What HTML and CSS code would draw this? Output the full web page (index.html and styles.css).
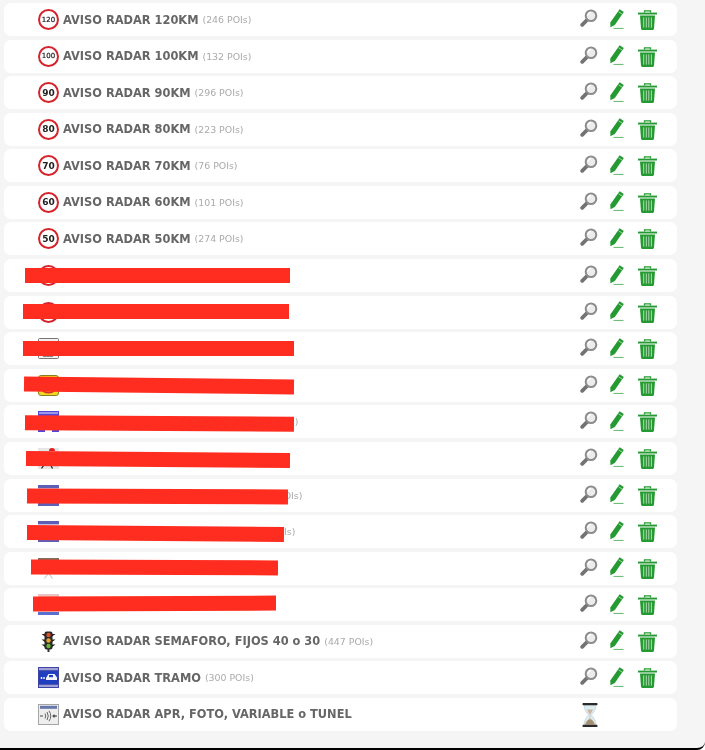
FILE: index.html
```html
<!DOCTYPE html>
<html lang="en">
  <head>
    <meta charset="UTF-8" />
    <meta name="viewport" content="width=device-width, initial-scale=1.0" />
    <title>Aviso radar</title>
    <link rel="stylesheet" href="styles.css">
  </head>
  <body>
    <svg class="defs" width="0" height="0" aria-hidden="true">
      <defs>
        <symbol id="i-search" viewBox="0 0 18 18">
          <path d="M7.5 10.500 2.200 15.800" stroke="#737373" stroke-width="3.800" stroke-linecap="round" fill="none" />
          <circle cx="11" cy="6.800" r="5.300" fill="#ececec" stroke="#8c8c8c" stroke-width="2" />
          <path d="M8 6.500a3 3 0 0 1 3-3" stroke="#fff" stroke-width="1.400" fill="none" />
        </symbol>
        <symbol id="i-pencil" viewBox="0 0 14 20">
          <path d="M9.600 0.300 13.800 3 4.800 16 .4 18.300 .3 13.400Z" fill="#269a32" />
          <path d="M8.600 2.800 12 5" stroke="#d6efd8" stroke-width=".7" />
          <rect x="3.500" y="18.900" width="10" height="1.100" fill="#6fbd77" />
        </symbol>
        <symbol id="i-trash" viewBox="0 0 19 20">
          <path d="M6.500 2.400V.9h6v1.500" stroke="#269a32" stroke-width="1.300" fill="none" />
          <rect x="0" y="2.600" width="19" height="1.900" fill="#269a32" />
          <path d="M2 5.400h15l-1 13.200q-.1 1.300-1.300 1.300H4.300q-1.200 0-1.300-1.300Z" fill="#269a32" />
          <path d="M5.700 7.400v10.200M8.300 7.400v10.200M10.800 7.400v10.200M13.400 7.400v10.200" stroke="#bfe3c2" stroke-width=".9" />
        </symbol>
        <symbol id="i-hourglass" viewBox="0 0 16 24">
          <path d="M2 2h12c0 5-3 8-4.600 10C11 14 14 17 14 22H2c0-5 3-8 4.600-10C5 10 2 7 2 2Z" fill="#dcecf0" stroke="#b9cdd3" stroke-width=".6" />
          <path d="M5 6.500h6L8.400 11.500h-.8Z" fill="#c9b9a0" />
          <path d="M8 12v4M3.400 21.500c.6-3 2.800-5 4.600-5.500 1.800.5 4 2.500 4.600 5.500Z" fill="#a58f70" stroke="#b8a68c" stroke-width=".5" />
          <rect x="0.500" y="0" width="15" height="2.200" rx=".8" fill="#2b2b2b" />
          <rect x="0.500" y="21.800" width="15" height="2.200" rx=".8" fill="#2b2b2b" />
        </symbol>
        <symbol id="s-light" viewBox="0 0 21 21">
          <path d="M3.500 3h3.500v2.500ZM17.500 3H14v2.500ZM3.500 8.500h3.500V11ZM17.500 8.500H14V11ZM3.500 13.500h3.500V16ZM17.500 13.500H14V16Z" fill="#1c1c1c" />
          <rect x="6.500" y="0.500" width="8" height="18" rx="2" fill="#2a2a2a" />
          <rect x="9.500" y="18" width="2" height="3" fill="#333" />
          <circle cx="10.500" cy="4" r="2.200" fill="#d9502b" />
          <circle cx="10.500" cy="9.500" r="2.200" fill="#e9a52c" />
          <circle cx="10.500" cy="15" r="2.200" fill="#6ab531" />
        </symbol>
        <symbol id="s-blue" viewBox="0 0 21 21">
          <rect width="21" height="21" fill="#3f43a6" />
          <rect x="1" y="1" width="19" height="2.200" fill="#9ea1d6" />
          <rect x="1" y="17.800" width="19" height="2.200" fill="#9ea1d6" />
          <rect x="1" y="4.200" width="19" height="12.600" fill="#1f3fc0" />
          <path d="M8 11 10.500 7h6l2.500 3.500v2.500H8Z" fill="#f2f4ff" />
          <circle cx="3.500" cy="11" r=".9" fill="#fff" />
          <circle cx="6" cy="11" r=".9" fill="#fff" />
          <rect x="11" y="8" width="4" height="2.200" fill="#1f3fc0" />
        </symbol>
        <symbol id="s-apr" viewBox="0 0 21 21">
          <rect x=".5" y=".5" width="20" height="20" fill="#eeeeee" stroke="#a5a5a5" />
          <rect x="2" y="1.800" width="17" height="3" fill="#6577ab" />
          <path d="M2 12h3M16 12h3" stroke="#444" stroke-width="1.200" />
          <path d="M7 9.500q1.500 2.500 0 5M9 8q2.500 4 0 8M11 6.800q3.500 5.200 0 10.400" stroke="#555" stroke-width=".9" fill="none" />
          <circle cx="16" cy="12" r="1.500" fill="#555" />
        </symbol>
        <symbol id="s-white" viewBox="0 0 21 21">
          <rect x=".5" y=".5" width="20" height="20" rx="1" fill="#f2f2f2" stroke="#777" />
          <rect x="5" y="15" width="10" height="3.500" fill="#1a1a1a" />
        </symbol>
        <symbol id="s-yellow" viewBox="0 0 21 21">
          <rect x=".5" y=".5" width="20" height="20" rx="2.500" fill="#f4d820" stroke="#8b7d22" />
          <path d="M5 16q5.500 3.500 11 0" stroke="#d8332a" stroke-width="1.600" fill="none" />
        </symbol>
        <symbol id="s-violet" viewBox="0 0 21 21">
          <rect width="21" height="21" fill="#5147d8" />
          <rect x="1" y="1" width="19" height="2" fill="#9d97ea" />
          <rect x="7" y="17" width="7" height="4" fill="#fff" />
        </symbol>
        <symbol id="s-person" viewBox="0 0 21 21">
          <rect width="21" height="21" fill="#e6e6e6" />
          <path d="M14 0a3 3 0 0 1 3 3h-6a3 3 0 0 1 3-3Z" fill="#e02020" />
          <path d="M3.500 20.500 7 15.500h5l2.500 5" stroke="#222" stroke-width="1.300" fill="none" />
        </symbol>
        <symbol id="s-band" viewBox="0 0 21 21">
          <rect width="21" height="21" fill="#fff" />
          <rect y="0" width="21" height="3.400" fill="#5d60b4" />
          <rect y="17.600" width="21" height="3.400" fill="#5d60b4" />
        </symbol>
        <symbol id="s-brown" viewBox="0 0 21 21">
          <rect width="21" height="21" fill="#fff" />
          <rect width="21" height="3" fill="#7d6e5e" />
          <path d="M6.500 20.500 10.500 15l4 5.500" stroke="#bbb" stroke-width="1" fill="none" />
        </symbol>
        <symbol id="s-pink" viewBox="0 0 21 21">
          <rect width="21" height="21" fill="#f3eeee" />
          <rect width="21" height="3" fill="#ecc3c3" />
          <rect y="18" width="21" height="3" fill="#5b6fd0" />
        </symbol>
      </defs>
    </svg>

    <div class="panel">
      <ul class="list">
        <li class="row">
          <span class="sign sign-small">120</span>
          <span class="name">AVISO RADAR 120KM</span><span class="count">(246 POIs)</span>
          <div class="actions"><svg class="a-search"><use href="#i-search" /></svg><svg class="a-pencil"><use href="#i-pencil" /></svg><svg class="a-trash"><use href="#i-trash" /></svg></div>
        </li>
        <li class="row">
          <span class="sign sign-small">100</span>
          <span class="name">AVISO RADAR 100KM</span><span class="count">(132 POIs)</span>
          <div class="actions"><svg class="a-search"><use href="#i-search" /></svg><svg class="a-pencil"><use href="#i-pencil" /></svg><svg class="a-trash"><use href="#i-trash" /></svg></div>
        </li>
        <li class="row">
          <span class="sign">90</span>
          <span class="name">AVISO RADAR 90KM</span><span class="count">(296 POIs)</span>
          <div class="actions"><svg class="a-search"><use href="#i-search" /></svg><svg class="a-pencil"><use href="#i-pencil" /></svg><svg class="a-trash"><use href="#i-trash" /></svg></div>
        </li>
        <li class="row">
          <span class="sign">80</span>
          <span class="name">AVISO RADAR 80KM</span><span class="count">(223 POIs)</span>
          <div class="actions"><svg class="a-search"><use href="#i-search" /></svg><svg class="a-pencil"><use href="#i-pencil" /></svg><svg class="a-trash"><use href="#i-trash" /></svg></div>
        </li>
        <li class="row">
          <span class="sign">70</span>
          <span class="name">AVISO RADAR 70KM</span><span class="count">(76 POIs)</span>
          <div class="actions"><svg class="a-search"><use href="#i-search" /></svg><svg class="a-pencil"><use href="#i-pencil" /></svg><svg class="a-trash"><use href="#i-trash" /></svg></div>
        </li>
        <li class="row">
          <span class="sign">60</span>
          <span class="name">AVISO RADAR 60KM</span><span class="count">(101 POIs)</span>
          <div class="actions"><svg class="a-search"><use href="#i-search" /></svg><svg class="a-pencil"><use href="#i-pencil" /></svg><svg class="a-trash"><use href="#i-trash" /></svg></div>
        </li>
        <li class="row">
          <span class="sign">50</span>
          <span class="name">AVISO RADAR 50KM</span><span class="count">(274 POIs)</span>
          <div class="actions"><svg class="a-search"><use href="#i-search" /></svg><svg class="a-pencil"><use href="#i-pencil" /></svg><svg class="a-trash"><use href="#i-trash" /></svg></div>
        </li>

        <!-- rows covered by the red bars -->
        <li class="row">
          <span class="sign"></span>
          <div class="actions"><svg class="a-search"><use href="#i-search" /></svg><svg class="a-pencil"><use href="#i-pencil" /></svg><svg class="a-trash"><use href="#i-trash" /></svg></div>
        </li>
        <li class="row">
          <span class="sign"></span>
          <div class="actions"><svg class="a-search"><use href="#i-search" /></svg><svg class="a-pencil"><use href="#i-pencil" /></svg><svg class="a-trash"><use href="#i-trash" /></svg></div>
        </li>
        <li class="row">
          <svg class="pic"><use href="#s-white" /></svg>
          <div class="actions"><svg class="a-search"><use href="#i-search" /></svg><svg class="a-pencil"><use href="#i-pencil" /></svg><svg class="a-trash"><use href="#i-trash" /></svg></div>
        </li>
        <li class="row">
          <svg class="pic"><use href="#s-yellow" /></svg>
          <div class="actions"><svg class="a-search"><use href="#i-search" /></svg><svg class="a-pencil"><use href="#i-pencil" /></svg><svg class="a-trash"><use href="#i-trash" /></svg></div>
        </li>
        <li class="row">
          <svg class="pic"><use href="#s-violet" /></svg>
          <span class="count tail-a">POIs)</span>
          <div class="actions"><svg class="a-search"><use href="#i-search" /></svg><svg class="a-pencil"><use href="#i-pencil" /></svg><svg class="a-trash"><use href="#i-trash" /></svg></div>
        </li>
        <li class="row">
          <svg class="pic"><use href="#s-person" /></svg>
          <div class="actions"><svg class="a-search"><use href="#i-search" /></svg><svg class="a-pencil"><use href="#i-pencil" /></svg><svg class="a-trash"><use href="#i-trash" /></svg></div>
        </li>
        <li class="row">
          <svg class="pic"><use href="#s-band" /></svg>
          <span class="count tail-b">POIs)</span>
          <div class="actions"><svg class="a-search"><use href="#i-search" /></svg><svg class="a-pencil"><use href="#i-pencil" /></svg><svg class="a-trash"><use href="#i-trash" /></svg></div>
        </li>
        <li class="row">
          <svg class="pic"><use href="#s-band" /></svg>
          <span class="count tail-c">POIs)</span>
          <div class="actions"><svg class="a-search"><use href="#i-search" /></svg><svg class="a-pencil"><use href="#i-pencil" /></svg><svg class="a-trash"><use href="#i-trash" /></svg></div>
        </li>
        <li class="row">
          <svg class="pic"><use href="#s-brown" /></svg>
          <div class="actions"><svg class="a-search"><use href="#i-search" /></svg><svg class="a-pencil"><use href="#i-pencil" /></svg><svg class="a-trash"><use href="#i-trash" /></svg></div>
        </li>
        <li class="row">
          <svg class="pic"><use href="#s-pink" /></svg>
          <div class="actions"><svg class="a-search"><use href="#i-search" /></svg><svg class="a-pencil"><use href="#i-pencil" /></svg><svg class="a-trash"><use href="#i-trash" /></svg></div>
        </li>

        <li class="row">
          <svg class="pic"><use href="#s-light" /></svg>
          <span class="name">AVISO RADAR SEMAFORO, FIJOS 40 o 30</span><span class="count">(447 POIs)</span>
          <div class="actions"><svg class="a-search"><use href="#i-search" /></svg><svg class="a-pencil"><use href="#i-pencil" /></svg><svg class="a-trash"><use href="#i-trash" /></svg></div>
        </li>
        <li class="row">
          <svg class="pic"><use href="#s-blue" /></svg>
          <span class="name">AVISO RADAR TRAMO</span><span class="count">(300 POIs)</span>
          <div class="actions"><svg class="a-search"><use href="#i-search" /></svg><svg class="a-pencil"><use href="#i-pencil" /></svg><svg class="a-trash"><use href="#i-trash" /></svg></div>
        </li>
        <li class="row">
          <svg class="pic"><use href="#s-apr" /></svg>
          <span class="name">AVISO RADAR APR, FOTO, VARIABLE o TUNEL</span>
          <div class="actions"><svg class="a-hourglass"><use href="#i-hourglass" /></svg></div>
        </li>
      </ul>

      <div class="bar bar-8"></div>
      <div class="bar bar-9"></div>
      <div class="bar bar-10"></div>
      <div class="bar bar-11"></div>
      <div class="bar bar-12"></div>
      <div class="bar bar-13"></div>
      <div class="bar bar-14"></div>
      <div class="bar bar-15"></div>
      <div class="bar bar-16"></div>
      <div class="bar bar-17"></div>
    </div>
  </body>
</html>
```

FILE: styles.css
```css
html {
  background: #fff;
}
body {
  margin: 0;
  font-family: "DejaVu Sans", Verdana, sans-serif;
}
.defs {
  position: absolute;
}
.panel {
  position: relative;
  height: 750px;
  box-sizing: border-box;
  overflow: hidden;
  background: #f5f5f5;
  border-bottom: 2px solid #000;
  border-bottom-right-radius: 8px;
  filter: blur(0.5px);
}
.list {
  display: flex;
  flex-direction: column;
  gap: 3.58px;
  width: 673px;
  margin: 0 0 0 4px;
  padding: 3px 0 0;
  list-style: none;
}
.row {
  display: flex;
  align-items: center;
  height: 33px;
  padding-left: 34px;
  background: #fff;
  border-radius: 7px;
}
.sign {
  display: flex;
  align-items: center;
  justify-content: center;
  flex: none;
  width: 21px;
  height: 21px;
  box-sizing: border-box;
  border: 2.8px solid #d6232b;
  border-radius: 50%;
  background: #fff;
  color: #222;
  font-size: 9px;
  font-weight: bold;
}
.sign-small {
  font-size: 7px;
  font-weight: normal;
  -webkit-text-stroke: 0.2px #222;
}
.pic {
  flex: none;
  width: 21px;
  height: 21px;
}
.name {
  margin-left: 4px;
  color: #666;
  font-size: 11.4px;
  font-weight: bold;
  white-space: nowrap;
}
.count {
  margin-left: 4px;
  color: #aaa;
  font-size: 9.4px;
  white-space: nowrap;
}
.count.tail-a {
  margin-left: 215px;
}
.count.tail-b {
  margin-left: 219px;
}
.count.tail-c {
  margin-left: 212px;
}
.actions {
  display: flex;
  align-items: center;
  flex: none;
  width: 77px;
  margin-left: auto;
  margin-right: 20px;
}
.a-search {
  width: 18px;
  height: 18px;
  margin-top: -3px;
}
.a-pencil {
  width: 14px;
  height: 20px;
  margin-left: 12px;
  margin-top: -2px;
}
.a-trash {
  width: 19px;
  height: 20px;
  margin-left: 14px;
  margin-top: 1px;
}
.a-hourglass {
  width: 16px;
  height: 24px;
  margin-left: 2px;
  margin-top: 1px;
}
/* hand drawn red bars over the rows */
.bar {
  position: absolute;
  height: 14.500px;
  background: #ff2d20;
}
.bar-8 {
  left: 24.500px;
  top: 268px;
  width: 265px;
}
.bar-9 {
  left: 23px;
  top: 304.300px;
  width: 266px;
}
.bar-10 {
  left: 23px;
  top: 341px;
  width: 271px;
}
.bar-11 {
  left: 24px;
  top: 378px;
  width: 270px;
  rotate: 0.6deg;
}
.bar-12 {
  left: 25px;
  top: 416.200px;
  width: 269px;
  rotate: 0.3deg;
}
.bar-13 {
  left: 26px;
  top: 451.500px;
  width: 264px;
  rotate: 0.4deg;
}
.bar-14 {
  left: 27px;
  top: 488.800px;
  width: 261px;
  rotate: 0.2deg;
}
.bar-15 {
  left: 27px;
  top: 525.800px;
  width: 257px;
  rotate: 0.4deg;
}
.bar-16 {
  left: 31px;
  top: 560px;
  width: 247px;
  rotate: 0.2deg;
}
.bar-17 {
  left: 33px;
  top: 596.200px;
  width: 243px;
  rotate: -0.2deg;
}
```
